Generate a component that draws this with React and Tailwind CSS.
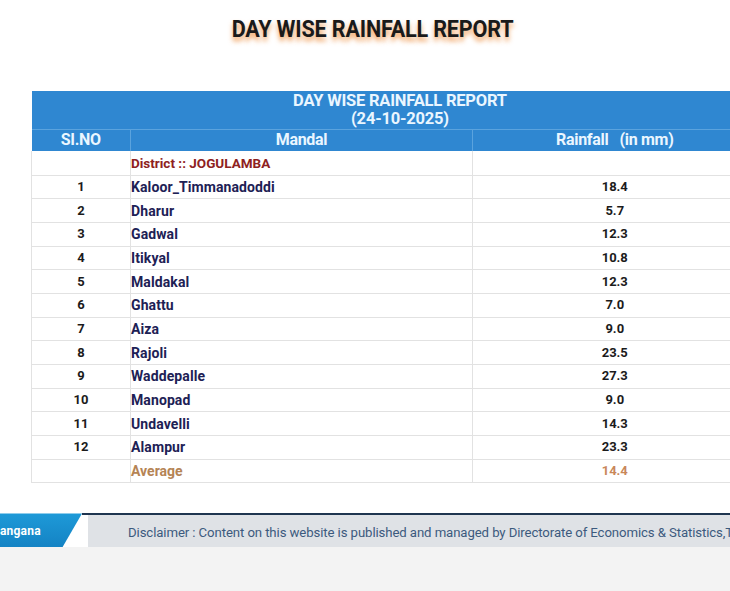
import React from "react";

const rows = [
  ["1", "Kaloor_Timmanadoddi", "18.4"],
  ["2", "Dharur", "5.7"],
  ["3", "Gadwal", "12.3"],
  ["4", "Itikyal", "10.8"],
  ["5", "Maldakal", "12.3"],
  ["6", "Ghattu", "7.0"],
  ["7", "Aiza", "9.0"],
  ["8", "Rajoli", "23.5"],
  ["9", "Waddepalle", "27.3"],
  ["10", "Manopad", "9.0"],
  ["11", "Undavelli", "14.3"],
  ["12", "Alampur", "23.3"],
];

export default function App() {
  return (
    <div className="w-[730px] h-[591px] overflow-hidden bg-white relative font-['Roboto',sans-serif]">
      <div className="h-[56px] flex items-center justify-center">
        <div className="text-[24px] font-bold text-[#1a1a1a] scale-x-[0.9] tracking-[-0.2px] [text-shadow:0_4px_6px_rgba(235,130,40,0.75)] leading-none pt-[2px] ml-[15px]">
          DAY WISE RAINFALL REPORT
        </div>
      </div>
      <div className="h-[35px]" />
      <div className="pl-[31px] w-[800px]">
        <table className="border-collapse table-fixed w-[737px]">
          <colgroup>
            <col className="w-[99px]" />
            <col className="w-[342px]" />
            <col className="w-[296px]" />
          </colgroup>
          <thead>
            <tr className="bg-[#2f87d1] h-[38px]">
              <th colSpan={3} className="text-[#eaf6ff] text-[16.5px] font-bold leading-[18px] p-0 pt-[1px] border-b border-[#5aa3de] tracking-[-0.2px]">
                DAY WISE RAINFALL REPORT
                <br />
                (24-10-2025)
              </th>
            </tr>
            <tr className="bg-[#2f87d1] h-[22px] text-[#eaf6ff] text-[16px] leading-[18px] font-bold tracking-[-0.3px]">
              <th className="border-r border-[#5aa3de] font-bold p-0">SI.NO</th>
              <th className="border-r border-[#5aa3de] font-bold p-0">Mandal</th>
              <th className="font-bold whitespace-pre p-0 pr-[12px]">Rainfall   (in mm)</th>
            </tr>
          </thead>
          <tbody className="text-[13.5px] font-bold leading-[16px]">
            <tr className="h-[24px] border-b border-[#e2e2e2]">
              <td className="border-l border-r border-[#e2e2e2]" />
              <td className="border-r border-[#e2e2e2] text-[#8e2121]">District :: JOGULAMBA</td>
              <td />
            </tr>
            {rows.map((r) => (
              <tr key={r[0]} className="h-[23.7px] border-b border-[#e2e2e2]">
                <td className="border-l border-r border-[#e2e2e2] text-center text-[#1b1b1b] text-[13px]">{r[0]}</td>
                <td className="border-r border-[#e2e2e2] text-[#1d2155] text-[14px] tracking-[0.1px]">{r[1]}</td>
                <td className="text-center text-[#1b1b1b] pr-[12px] text-[13px]">{r[2]}</td>
              </tr>
            ))}
            <tr className="h-[23.7px] border-b border-[#e2e2e2]">
              <td className="border-l border-r border-[#e2e2e2]" />
              <td className="border-r border-[#e2e2e2] text-[#b58455] text-[14px]">Average</td>
              <td className="text-center text-[#c9875a] pr-[12px] text-[13px]">14.4</td>
            </tr>
          </tbody>
        </table>
      </div>
      <div className="h-[30px]" />
      <div className="flex h-[34px] w-[730px]">
        <div className="w-[82px] shrink-0 h-full bg-gradient-to-b from-[#1e9ad8] to-[#1483c4] [clip-path:polygon(0_0,100%_0,76%_100%,0_100%)] flex items-center pt-[2px]">
          <span className="text-white text-[12px] font-bold tracking-[0.2px]">angana</span>
        </div>
        <div className="flex-1 min-w-0 h-full flex flex-col">
          <div className="h-[2px] bg-[#1f3550]" />
          <div className="flex-1 ml-[6px] bg-[#dfe2e6] flex items-center pl-[40px] pt-[2px] whitespace-nowrap overflow-hidden">
            <span className="text-[13.2px] text-[#3c5a7e] tracking-[-0.1px]">
              Disclaimer : Content on this website is published and managed by Directorate of Economics &amp; Statistics,Telangana
            </span>
          </div>
        </div>
      </div>
      <div className="absolute left-0 right-0 top-[547px] bottom-0 bg-[#f3f3f3]" />
    </div>
  );
}
